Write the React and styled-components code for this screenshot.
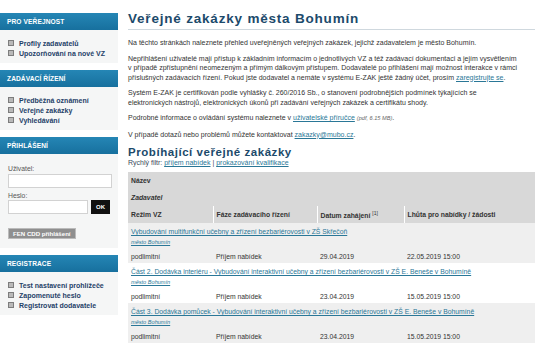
import React from "react";
import styled, { createGlobalStyle } from "styled-components";

const GlobalStyle = createGlobalStyle`
    body {
        margin: 0;
        background: #fff;
        font-family: "Liberation Sans", Arial, sans-serif;
        color: #333;
    }
`;

const sideBoxes = [
    { title: "PRO VEŘEJNOST", links: ["Profily zadavatelů", "Upozorňování na nové VZ"] },
    { title: "ZADÁVACÍ ŘÍZENÍ", links: ["Předběžná oznámení", "Veřejné zakázky", "Vyhledávání"] },
];

const rows = [
    {
        name: "Vybudování multifunkční učebny a zřízení bezbariérovosti v ZŠ Skřečoň",
        start: "29.04.2019",
        end: "22.05.2019 15:00",
    },
    {
        name: "Část 2. Dodávka interiéru - Vybudování interaktivní učebny a zřízení bezbariérovosti v ZŠ E. Beneše v Bohumíně",
        start: "23.04.2019",
        end: "15.05.2019 15:00",
    },
    {
        name: "Část 3. Dodávka pomůcek - Vybudování interaktivní učebny a zřízení bezbariérovosti v ZŠ E. Beneše v Bohumíně",
        start: "23.04.2019",
        end: "15.05.2019 15:00",
    },
];

function SideList({ links }) {
    return (
        <List>
            {links.map((l) => (
                <li key={l}>
                    <Bullet />
                    <a href="#">{l}</a>
                </li>
            ))}
        </List>
    );
}

export default function App() {
    return (
        <Page>
            <GlobalStyle />
            <Sidebar>
                {sideBoxes.map((b) => (
                    <Box key={b.title}>
                        <BoxHead>{b.title}</BoxHead>
                        <SideList links={b.links} />
                    </Box>
                ))}
                <Box>
                    <BoxHead>PŘIHLÁŠENÍ</BoxHead>
                    <Login>
                        <Label>Uživatel:</Label>
                        <Input />
                        <Label $gap>Heslo:</Label>
                        <PassRow>
                            <Input type="password" />
                            <OkButton>OK</OkButton>
                        </PassRow>
                        <FenButton>FEN CDD přihlášení</FenButton>
                    </Login>
                </Box>
                <Box>
                    <BoxHead>REGISTRACE</BoxHead>
                    <SideList
                        links={[
                            "Test nastavení prohlížeče",
                            "Zapomenuté heslo",
                            "Registrovat dodavatele",
                        ]}
                    />
                </Box>
            </Sidebar>

            <Main>
                <Title>Veřejné zakázky města Bohumín</Title>
                <Text>
                    Na těchto stránkách naleznete přehled uveřejněných veřejných zakázek, jejichž zadavatelem je město Bohumín.
                </Text>
                <Text>
                    Nepřihlášení uživatelé mají přístup k základním informacím o jednotlivých VZ a též zadávací dokumentaci a jejím vysvětlením
                    <br />
                    v případě zpřístupnění neomezeným a přímým dálkovým přístupem. Dodavatelé po přihlášení mají možnost interakce v rámci
                    <br />
                    příslušných zadávacích řízení. Pokud jste dodavatel a nemáte v systému E-ZAK ještě žádný účet, prosím{" "}
                    <Link href="#">zaregistrujte se</Link>.
                </Text>
                <Text>
                    Systém E-ZAK je certifikován podle vyhlášky č. 260/2016 Sb., o stanovení podrobnějších podmínek týkajících se
                    <br />
                    elektronických nástrojů, elektronických úkonů při zadávání veřejných zakázek a certifikátu shody.
                </Text>
                <Text>
                    Podrobné informace o ovládání systému naleznete v <Link href="#">uživatelské příručce</Link>{" "}
                    <Note>(pdf, 6.15 MB)</Note>.
                </Text>
                <Text>
                    V případě dotazů nebo problémů můžete kontaktovat <Link href="#">zakazky@mubo.cz</Link>.
                </Text>

                <SubTitle>Probíhající veřejné zakázky</SubTitle>
                <Filter>
                    Rychlý filtr: <Link href="#">příjem nabídek</Link> | <Link href="#">prokazování kvalifikace</Link>
                </Filter>

                <Table>
                    <colgroup>
                        <col style={{ width: 85 }} />
                        <col style={{ width: 104 }} />
                        <col style={{ width: 87 }} />
                        <col />
                    </colgroup>
                    <thead>
                        <tr>
                            <Th colSpan={4}>Název</Th>
                        </tr>
                        <tr>
                            <Th colSpan={4}>
                                <i>Zadavatel</i>
                            </Th>
                        </tr>
                        <tr>
                            <Th $sep>Režim VZ</Th>
                            <Th $sep>Fáze zadávacího řízení</Th>
                            <Th $sep>
                                Datum zahájení <sup>[1]</sup>
                            </Th>
                            <Th>Lhůta pro nabídky / žádosti</Th>
                        </tr>
                    </thead>
                    <tbody>
                        {rows.map((r, i) => (
                            <React.Fragment key={r.name}>
                                <Tr $odd={i % 2 === 0}>
                                    <NameCell colSpan={4}>
                                        <Link href="#">{r.name}</Link>
                                        <br />
                                        <Buyer href="#">město Bohumín</Buyer>
                                    </NameCell>
                                </Tr>
                                <Tr $odd={i % 2 === 0}>
                                    <Td>podlimitní</Td>
                                    <Td>Příjem nabídek</Td>
                                    <Td>{r.start}</Td>
                                    <Td>{r.end}</Td>
                                </Tr>
                            </React.Fragment>
                        ))}
                    </tbody>
                </Table>
            </Main>
        </Page>
    );
}

const Page = styled.div`
    display: flex;
    align-items: flex-start;
    width: 540px;
    height: 343px;
    overflow: hidden;
`;

const Sidebar = styled.div`
    width: 118px;
    flex-shrink: 0;
    padding-top: 13px;
    display: flex;
    flex-direction: column;
    gap: 7px;
`;

const Box = styled.div`
    background: #f5f6f6;
`;

const BoxHead = styled.div`
    height: 17px;
    line-height: 17px;
    padding-left: 7px;
    background: linear-gradient(#2586b5, #17709e);
    color: #fff;
    font-size: 6.6px;
    font-weight: 700;
    letter-spacing: 0.1px;
`;

const List = styled.ul`
    list-style: none;
    margin: 0;
    padding: 8px 0 5px 8px;
    li {
        display: flex;
        align-items: center;
        height: 10px;
    }
    a {
        color: #1f4168;
        text-decoration: none;
        font-size: 7px;
        font-weight: 700;
    }
`;

const Bullet = styled.span`
    width: 4px;
    height: 4px;
    margin-right: 5px;
    background: #b9b9b9;
    border: 1px solid #7d7d7d;
`;

const Login = styled.div`
    display: flex;
    flex-direction: column;
    align-items: flex-start;
    padding: 10px 6px 9px 8px;
`;

const Label = styled.div`
    font-size: 6.8px;
    line-height: 9px;
    color: #555;
    margin-top: ${(p) => (p.$gap ? "3px" : "0")};
`;

const Input = styled.input`
    box-sizing: border-box;
    width: 104px;
    height: 14px;
    margin: 1px 0 0;
    border: 1px solid #d2d2d2;
    background: #fff;
    padding: 0;
`;

const PassRow = styled.div`
    display: flex;
    align-items: center;
    gap: 3px;
    input {
        width: 80px;
        margin: 0;
    }
`;

const OkButton = styled.button`
    width: 19px;
    height: 14px;
    padding: 0;
    border: none;
    background: #111;
    color: #fff;
    font-family: inherit;
    font-size: 6px;
    font-weight: 700;
`;

const FenButton = styled.button`
    margin-top: 14px;
    height: 11px;
    padding: 0 4px;
    border: 1px solid #bbb;
    background: #8f8f8f;
    color: #fff;
    font-family: inherit;
    font-size: 6.1px;
    font-weight: 700;
    line-height: 9px;
`;

const Main = styled.div`
    margin-left: 10px;
    width: 407px;
    flex-shrink: 0;
    font-size: 7px;
    color: #333;
`;

const Title = styled.h1`
    margin: 0;
    padding: 12px 0 3px;
    border-bottom: 1px solid #cfd8de;
    font-size: 13.5px;
    line-height: 14px;
    letter-spacing: 0.8px;
    color: #1c4a6b;
`;

const Text = styled.p`
    margin: 6px 0 0;
    line-height: 9.5px;
    white-space: nowrap;
    &:first-of-type {
        margin-top: 8px;
    }
`;

const Link = styled.a`
    color: #2a7797;
    text-decoration: underline;
`;

const Note = styled.span`
    font-style: italic;
    font-size: 5.6px;
    color: #666;
`;

const SubTitle = styled.h2`
    margin: 7px 0 0;
    font-size: 11.5px;
    line-height: 12px;
    letter-spacing: 0.55px;
    color: #1c4a6b;
`;

const Filter = styled.div`
    line-height: 10px;
    color: #3a4a5a;
`;

const Table = styled.table`
    margin-top: 4px;
    width: 407px;
    border-collapse: collapse;
    table-layout: fixed;
    font-size: 6.8px;
`;

const Th = styled.th`
    height: 17px;
    padding: 0 3px;
    text-align: left;
    background: #d8d8d8;
    color: #333;
    border-right: ${(p) => (p.$sep ? "1px solid #fff" : "none")};
    sup {
        font-size: 5px;
        font-weight: 400;
    }
`;

const Tr = styled.tr`
    background: ${(p) => (p.$odd ? "#efefef" : "#fff")};
`;

const NameCell = styled.td`
    padding: 4px 3px 2px;
    line-height: 10px;
    white-space: nowrap;
`;

const Buyer = styled.a`
    color: #2a7797;
    font-style: italic;
    font-size: 5.6px;
    text-decoration: underline;
`;

const Td = styled.td`
    padding: 3px 3px 1px;
    line-height: 10px;
    color: #333;
`;
